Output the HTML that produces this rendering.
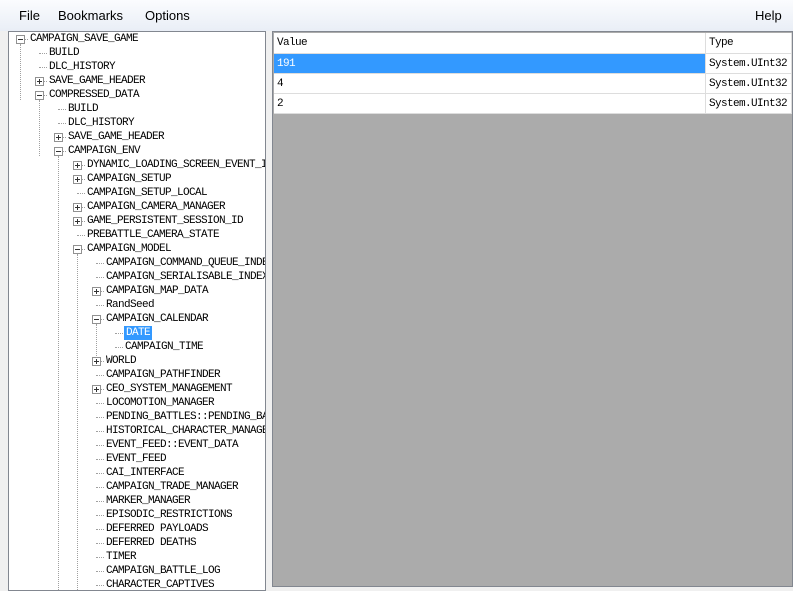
<!DOCTYPE html>
<html><head><meta charset="utf-8"><style>
*{margin:0;padding:0;box-sizing:border-box}
body{width:793px;height:587px;overflow:hidden;background:#f0f0f0;font-family:"Liberation Sans",sans-serif;position:relative}
#menu{position:absolute;left:0;top:0;width:793px;height:31px;background:linear-gradient(#fbfcfe,#e9eef6);font-size:13px;color:#000}
#menu span{position:absolute;top:8px}
#tree{position:absolute;left:8px;top:31px;width:258px;height:560px;background:#fff;border:1px solid #828790;overflow:hidden}
.r{position:absolute;height:14px;line-height:14px;font-family:"Liberation Mono","Noto Sans CJK SC",monospace;font-size:11px;letter-spacing:-0.6px;color:#000;white-space:nowrap}
.b{position:absolute;width:9px;height:9px;border:1px solid #919191;background:#fff;font-size:0}
.b:before{content:"";position:absolute;left:1px;top:3px;width:5px;height:1px;background:#333}
.p:after{content:"";position:absolute;left:3px;top:1px;width:1px;height:5px;background:#333}
.h{position:absolute;height:0;border-top:1px dotted #a0a0a0}
.v{position:absolute;width:0;border-left:1px dotted #a0a0a0}
#right{position:absolute;left:272px;top:31px;width:521px;height:556px;background:#ababab;border:1px solid #828790}
.c{position:absolute;font-family:"Liberation Mono",monospace;font-size:11px;letter-spacing:-0.6px;line-height:20px;padding-left:3px;background:#fff;border-right:1px solid #ddd;border-bottom:1px solid #ddd;height:20px}
</style></head><body>
<div id="menu"><span style="left:19px">File</span><span style="left:58px">Bookmarks</span><span style="left:145px">Options</span><span style="left:755px">Help</span></div>
<div id="tree">
<div class="v" style="left:11px;top:12px;height:56px"></div>
<div class="v" style="left:30px;top:68px;height:56px"></div>
<div class="v" style="left:49px;top:124px;height:440px"></div>
<div class="v" style="left:68px;top:222px;height:340px"></div>
<div class="v" style="left:87px;top:292px;height:42px"></div>
<div id="rows"></div>
</div>
<div id="right">
<div class="c" style="left:1px;top:1px;width:432px;height:21px">Value</div>
<div class="c" style="left:433px;top:1px;width:86px;height:21px">Type</div>
<div class="c" style="left:1px;top:22px;width:432px;background:#3399ff;color:#fff">191</div>
<div class="c" style="left:433px;top:22px;width:86px">System.UInt32</div>
<div class="c" style="left:1px;top:42px;width:432px">4</div>
<div class="c" style="left:433px;top:42px;width:86px">System.UInt32</div>
<div class="c" style="left:1px;top:62px;width:432px">2</div>
<div class="c" style="left:433px;top:62px;width:86px">System.UInt32</div>
</div>
<div id="t" style="display:none">
0|m|CAMPAIGN_SAVE_GAME
1||BUILD
1||DLC_HISTORY
1|p|SAVE_GAME_HEADER
1|m|COMPRESSED_DATA
2||BUILD
2||DLC_HISTORY
2|p|SAVE_GAME_HEADER
2|m|CAMPAIGN_ENV
3|p|DYNAMIC_LOADING_SCREEN_EVENT_INFO
3|p|CAMPAIGN_SETUP
3||CAMPAIGN_SETUP_LOCAL
3|p|CAMPAIGN_CAMERA_MANAGER
3|p|GAME_PERSISTENT_SESSION_ID
3||PREBATTLE_CAMERA_STATE
3|m|CAMPAIGN_MODEL
4||CAMPAIGN_COMMAND_QUEUE_INDEX
4||CAMPAIGN_SERIALISABLE_INDEX
4|p|CAMPAIGN_MAP_DATA
4||RandSeed
4|m|CAMPAIGN_CALENDAR
5|s|DATE
5||CAMPAIGN_TIME
4|p|WORLD
4||CAMPAIGN_PATHFINDER
4|p|CEO_SYSTEM_MANAGEMENT
4||LOCOMOTION_MANAGER
4||PENDING_BATTLES::PENDING_BATTLE
4||HISTORICAL_CHARACTER_MANAGER
4||EVENT_FEED::EVENT_DATA
4||EVENT_FEED
4||CAI_INTERFACE
4||CAMPAIGN_TRADE_MANAGER
4||MARKER_MANAGER
4||EPISODIC_RESTRICTIONS
4||DEFERRED PAYLOADS
4||DEFERRED DEATHS
4||TIMER
4||CAMPAIGN_BATTLE_LOG
4||CHARACTER_CAPTIVES
</div>
<script>
var lines=document.getElementById('t').textContent.trim().split('\n'),h='';
lines.forEach(function(l,i){var p=l.trim().split('|'),L=+p[0],tx=21+19*L,y=i*14,cy=y+7;
h+='<div class="h" style="left:'+(tx-10)+'px;top:'+cy+'px;width:8px"></div>';
if(p[1]=='m'||p[1]=='p')h+='<div class="b'+(p[1]=='p'?' p':'')+'" style="left:'+(tx-14)+'px;top:'+(cy-4)+'px"></div>';
if(p[1]=='s')h+='<div class="r" style="left:'+(tx-1)+'px;top:'+y+'px;background:#3399ff;color:#fff;padding:0 2px">'+p[2]+'</div>';
else h+='<div class="r" style="left:'+tx+'px;top:'+y+'px">'+p[2]+'</div>';});
document.getElementById('rows').innerHTML=h;
</script>
</body></html>
